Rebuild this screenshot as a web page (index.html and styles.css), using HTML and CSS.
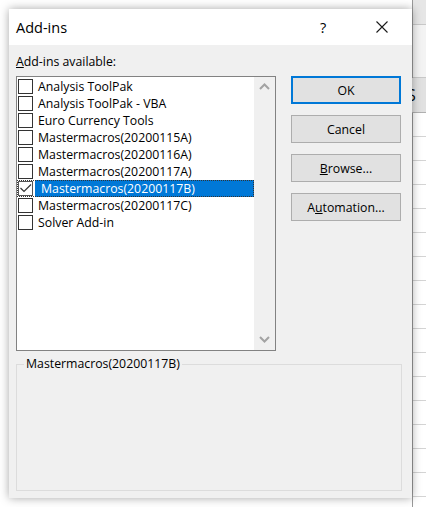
FILE: index.html
```html
<!DOCTYPE html>
<html>
<head>
<meta charset="utf-8">
<link rel="stylesheet" href="styles.css">
</head>
<body>
<div class="page">
  <div class="dialog">
    <div class="titlebar">
      <span class="title">Add-ins</span>
      <span class="help">?</span>
      <span class="close">
        <svg width="12" height="12" viewBox="0 0 12 12"><path d="M0.5 0.5 L11.5 11.5 M11.5 0.5 L0.5 11.5" stroke="#1a1a1a" stroke-width="1.1" fill="none"/></svg>
      </span>
    </div>
    <div class="body">
      <div class="label"><u>A</u>dd-ins available:</div>
      <div class="list">
        <div class="items">
          <div class="row"><span class="box"></span><span class="text">Analysis ToolPak</span></div>
          <div class="row"><span class="box"></span><span class="text">Analysis ToolPak - VBA</span></div>
          <div class="row"><span class="box"></span><span class="text">Euro Currency Tools</span></div>
          <div class="row"><span class="box"></span><span class="text">Mastermacros(20200115A)</span></div>
          <div class="row"><span class="box"></span><span class="text">Mastermacros(20200116A)</span></div>
          <div class="row"><span class="box"></span><span class="text">Mastermacros(20200117A)</span></div>
          <div class="row sel"><span class="box"><svg width="13" height="13" viewBox="0 0 13 13"><path d="M1.5 6 L5 9.5 L12 2.5" stroke="#333" stroke-width="1.2" fill="none"/></svg></span><span class="text">Mastermacros(20200117B)</span></div>
          <div class="row"><span class="box"></span><span class="text">Mastermacros(20200117C)</span></div>
          <div class="row"><span class="box"></span><span class="text">Solver Add-in</span></div>
        </div>
        <div class="scroll">
          <svg width="11" height="7" viewBox="0 0 11 7"><path d="M1 6 L5.5 1.5 L10 6" stroke="#a3a3a3" stroke-width="2" fill="none"/></svg>
          <svg width="11" height="7" viewBox="0 0 11 7"><path d="M1 1 L5.5 5.5 L10 1" stroke="#a3a3a3" stroke-width="2" fill="none"/></svg>
        </div>
      </div>
      <div class="buttons">
        <div class="btn default">OK</div>
        <div class="btn">Cancel</div>
        <div class="btn"><u>B</u>rowse...</div>
        <div class="btn">A<u>u</u>tomation...</div>
      </div>
      <fieldset class="group">
        <legend>Mastermacros(20200117B)</legend>
      </fieldset>
    </div>
  </div>
  <div class="sheet">
    <div class="sheet-head"></div>
    <div class="sheet-sub"></div>
    <div class="sheet-s">S</div>
    <div class="cells">
      <div class="cell"></div><div class="cell"></div><div class="cell"></div><div class="cell"></div>
      <div class="cell"></div><div class="cell"></div><div class="cell"></div><div class="cell"></div>
      <div class="cell"></div><div class="cell"></div><div class="cell"></div><div class="cell"></div>
      <div class="cell"></div><div class="cell"></div><div class="cell"></div><div class="cell"></div>
    </div>
  </div>
</div>
</body>
</html>
```

FILE: styles.css
```css
html, body {
  margin: 0;
  padding: 0;
  background: #ffffff;
  width: 426px;
  height: 507px;
  overflow: hidden;
  font-family: "Open Sans", "Noto Sans", sans-serif;
  color: #000;
}
.page {
  display: flex;
  width: 426px;
  height: 507px;
  padding-left: 9px;
  box-sizing: border-box;
}
.dialog {
  position: relative;
  z-index: 2;
  margin-top: 9px;
  width: 403px;
  height: 489px;
  flex: none;
  display: flex;
  flex-direction: column;
  background: #f0f0f0;
  box-shadow: 0 0 9px rgba(0,0,0,0.35);
}
.titlebar {
  height: 36px;
  background: #fff;
  display: flex;
  align-items: center;
  flex: none;
}
.title {
  margin-left: 7px;
  font-size: 14.5px;
  flex: 1;
}
.help {
  font-size: 14.5px;
  width: 8px;
  margin-right: 48px;
}
.close {
  display: flex;
  margin-right: 24px;
}
.body {
  flex: 1;
  min-height: 0;
  display: grid;
  grid-template-columns: 260px 110px;
  grid-template-rows: 22px 275px 135px;
  column-gap: 15px;
  padding: 9px 11px 0 7px;
}
.label {
  grid-column: 1 / -1;
  grid-row: 1;
  font-size: 12.3px;
  line-height: 16px;
}
.list {
  grid-row: 2;
  grid-column: 1;
  height: 275px;
  box-sizing: border-box;
  border: 1px solid #828282;
  background: #fff;
  display: flex;
}
.items {
  flex: 1;
  padding-top: 1px;
}
.row {
  height: 17px;
  display: flex;
  align-items: center;
  font-size: 12.3px;
  padding-left: 1px;
  box-sizing: border-box;
}
.box {
  width: 15px;
  height: 15px;
  box-sizing: border-box;
  border: 1px solid #333;
  background: #fff;
  display: flex;
  align-items: center;
  justify-content: center;
  flex: none;
}
.text {
  margin-left: 2px;
  padding-left: 3px;
  height: 17px;
  line-height: 17px;
  flex: 1;
  white-space: nowrap;
}
.row.sel {
  outline: 1px dotted #333;
  outline-offset: -1px;
}
.row.sel .box {
  border-color: #555;
}
.row.sel .text {
  background: #0078d7;
  color: #fff;
  padding-left: 6px;
  margin-left: 2px;
}
.scroll {
  width: 21px;
  background: #f0f0f0;
  display: flex;
  flex-direction: column;
  justify-content: space-between;
  align-items: center;
  padding: 6px 0 7px;
  box-sizing: border-box;
}
.buttons {
  grid-row: 2;
  grid-column: 2;
  display: flex;
  flex-direction: column;
  gap: 11px;
}
.btn {
  height: 28px;
  box-sizing: border-box;
  border: 1px solid #adadad;
  background: #e1e1e1;
  display: flex;
  align-items: center;
  justify-content: center;
  font-size: 12.3px;
}
.btn.default {
  border: 2px solid #0078d7;
}
.group {
  grid-column: 1 / -1;
  grid-row: 3;
  margin: 5px -1px 0 0;
  height: 135px;
  box-sizing: border-box;
  border: 1px solid #dcdcdc;
  padding: 0 0 0 7px;
  min-width: 0;
}
.group legend {
  padding: 0 2px;
  font-size: 12.3px;
  line-height: 16px;
}
.sheet {
  flex: 1;
  position: relative;
  z-index: 1;
  border-left: 1px solid #9a9a9a;
  background: #fff;
  display: flex;
  flex-direction: column;
}
.sheet-head {
  height: 24px;
  background: #e6e6e6;
  border-bottom: 1px solid #c8c8c8;
  flex: none;
}
.sheet-sub {
  height: 52px;
  background: #f3f3f3;
  border-bottom: 1px solid #c8c8c8;
  flex: none;
}
.sheet-s {
  height: 34px;
  font-size: 16px;
  line-height: 34px;
  margin-left: -6px;
  background: #e1e1e1;
  border-bottom: 1px solid #b0b0b0;
  flex: none;
}
.cells {
  display: flex;
  flex-direction: column;
}
.cell {
  height: 23px;
  border-bottom: 1px solid #d4d4d4;
  flex: none;
}
```
